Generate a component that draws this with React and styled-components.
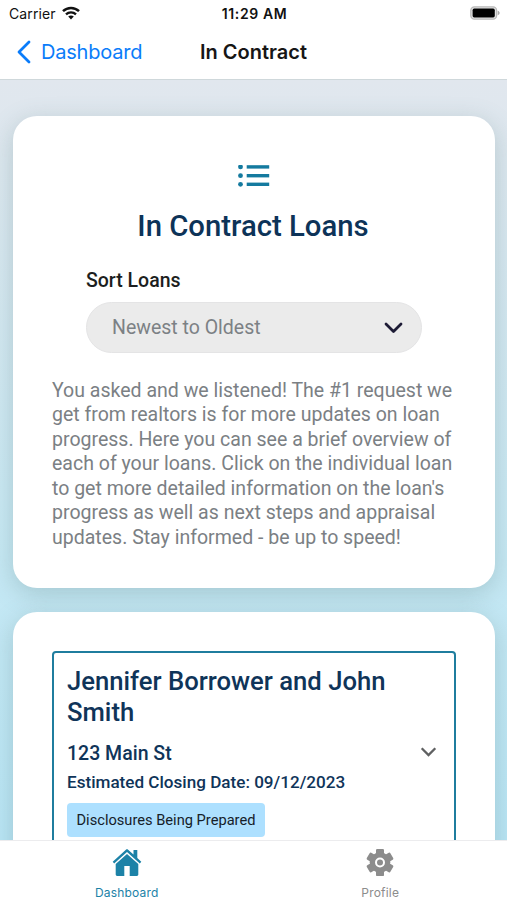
import React from 'react';
import styled, { createGlobalStyle } from 'styled-components';

const tabs = [
  { id: 'dashboard', label: 'Dashboard', active: true },
  { id: 'profile', label: 'Profile', active: false },
];

const loan = {
  borrower: 'Jennifer Borrower and John Smith',
  address: '123 Main St',
  closing: '09/12/2023',
  status: 'Disclosures Being Prepared',
};

const GlobalStyle = createGlobalStyle`
  * {
    box-sizing: border-box;
  }

  body {
    margin: 0;
    font-family: Roboto, sans-serif;
  }

  h1, h2, h3, p {
    margin: 0;
  }

  svg {
    display: block;
  }
`;

const Screen = styled.div`
  display: flex;
  flex-direction: column;
  height: 100vh;
  overflow: hidden;
  background-color: #fff;
`;

// HEADER
const StatusBar = styled.div`
  display: grid;
  grid-template-columns: 1fr auto 1fr;
  align-items: center;
  height: 26px;
  flex: none;
  padding: 0 7px 0 9px;
  font-family: Inter, sans-serif;
  font-size: 14px;
  color: #111;
`;

const Carrier = styled.div`
  display: flex;
  align-items: center;
  gap: 6px;
  letter-spacing: 0.1px;
`;

const Clock = styled.div`
  font-weight: 600;
  font-size: 14px;
  letter-spacing: 0.6px;
`;

const Battery = styled.div`
  justify-self: end;
`;

const NavBar = styled.div`
  display: grid;
  grid-template-columns: 1fr auto 1fr;
  align-items: center;
  height: 53px;
  flex: none;
  padding: 0 16px 1px;
  font-family: Inter, sans-serif;
`;

const BackLink = styled.div`
  display: flex;
  align-items: center;
  gap: 10px;
  color: #0a7cfa;
  font-size: 20px;
  letter-spacing: -0.2px;
`;

const NavTitle = styled.h1`
  font-size: 20px;
  font-weight: 600;
  color: #161616;
`;

// CONTENT
const Content = styled.main`
  flex: 1;
  min-height: 0;
  overflow: hidden;
  display: flex;
  flex-direction: column;
  gap: 24px;
  padding: 36px 12px 0 13px;
  border-top: 1px solid #cfd8db;
  background: linear-gradient(#e1e7ee, #c5e8f4 65%, #b9e5f5);
`;

const Card = styled.section`
  flex: none;
  border-radius: 24px;
  background-color: #fff;
  box-shadow: 0 6px 24px rgba(90, 125, 125, 0.3);
`;

const IntroCard = styled(Card)`
  height: 472px;
  padding: 49px 39px 0;
`;

const ListIcon = styled.svg`
  margin: 0 auto;
`;

const CardTitle = styled.h2`
  margin: 22px 2px 0 0;
  text-align: center;
  font-size: 29.3px;
  line-height: 34px;
  font-weight: 500;
  color: #0d3358;
`;

const SortField = styled.div`
  margin: 26px 34px 0;
`;

const SortLabel = styled.p`
  font-size: 19.5px;
  line-height: 24px;
  font-weight: 500;
  color: #1c1e20;
`;

const SortSelect = styled.div`
  display: flex;
  justify-content: space-between;
  align-items: center;
  height: 51px;
  margin-top: 9px;
  padding: 0 18px 0 25px;
  border: 1px solid #e4e4e5;
  border-radius: 26px;
  background-color: #ebebeb;
  color: #7c8185;
  font-size: 19.5px;
`;

const Intro = styled.p`
  margin-top: 26px;
  margin-right: -10px;
  font-size: 19.53px;
  line-height: 24.45px;
  color: #7b8084;
`;

// LOAN
const LoansCard = styled(Card)`
  height: 420px;
  padding: 39px 39px 0;
`;

const LoanBox = styled.div`
  display: flex;
  align-items: flex-start;
  height: 340px;
  border: 2px solid #1f7d9e;
  border-radius: 4px;
  padding: 13px 17px 0 13px;
`;

const LoanInfo = styled.div`
  flex: 1;
  color: #0f3459;
  font-weight: 500;
`;

const Borrower = styled.h3`
  font-size: 25.65px;
  line-height: 31px;
  font-weight: 500;
`;

const Address = styled.p`
  margin-top: 14px;
  font-size: 19.5px;
  line-height: 24px;
`;

const Closing = styled.p`
  margin-top: 5px;
  font-size: 17.1px;
  line-height: 22px;
`;

const StatusTag = styled.span`
  display: inline-block;
  height: 34px;
  margin-top: 10px;
  padding: 0 9.5px;
  border-radius: 4px;
  background-color: #ade0ff;
  color: #152029;
  font-size: 14.65px;
  line-height: 34px;
  font-weight: 400;
`;

const ExpandIcon = styled.svg`
  margin-top: 80px;
`;

// BOTTOM TABS
const TabBar = styled.nav`
  display: grid;
  grid-template-columns: 1fr 1fr;
  flex: none;
  height: 60px;
  border-top: 1px solid #ececee;
  background-color: #fff;
`;

const Tab = styled.div`
  display: flex;
  flex-direction: column;
  align-items: center;
  padding-top: 7px;
  color: ${({ $active }) => ($active ? '#1c82a7' : '#8c8c8c')};
  font-family: Inter, sans-serif;
  font-size: 12px;
  line-height: 16px;
`;

const TabLabel = styled.span`
  margin-top: 8px;
  letter-spacing: 0.2px;
`;

const WifiIcon = () => (
  <svg width="18" height="14" viewBox="0 0 18 14" fill="none">
    <path d="M1 5.2C5.5.9 12.5.9 17 5.2" stroke="#111" strokeWidth="2.5" />
    <path d="M4 8.3C6.8 5.6 11.2 5.6 14 8.3" stroke="#111" strokeWidth="2.3" />
    <path d="M6.2 10.5C7.8 9 10.2 9 11.8 10.5L9 13.5Z" fill="#111" />
  </svg>
);

const BatteryIcon = () => (
  <svg width="30" height="14" viewBox="0 0 30 14">
    <rect x="0.8" y="0.8" width="25.8" height="12.4" rx="3.6" fill="#e4e4e4" stroke="#b9b9b9" strokeWidth="1.3" />
    <rect x="2.6" y="2.6" width="22.2" height="8.8" rx="1.6" fill="#000" />
    <path d="M27.7 4.8c2.6.7 2.6 3.7 0 4.4z" fill="#aaa" />
  </svg>
);

const HomeIcon = () => (
  <svg width="30" height="29" viewBox="0 0 30 29" fill="currentColor">
    <path d="M13.9 1.8.7 13.7l1.5 1.8L15 4.1l12.8 11.4 1.5-1.8-4-3.6V2h-3.8v4.6l-5.4-4.8c-.7-.6-1.5-.6-2.2 0z" />
    <path d="M15 6 3.7 16v10.6c0 .9.6 1.4 1.4 1.4h7.2V17.9h5.4V28h7.2c.8 0 1.4-.5 1.4-1.4V16z" />
  </svg>
);

const GearIcon = () => (
  <svg width="30" height="29" viewBox="0 0 30 29" fill="none">
    <g fill="currentColor">
      <circle cx="15" cy="14.5" r="10.3" />
      {[0, 60, 120].map((angle) => (
        <rect key={angle} x="11" y="0.9" width="8" height="27.2" rx="1.2" transform={`rotate(${angle} 15 14.5)`} />
      ))}
    </g>
    <circle cx="15" cy="14.5" r="4" stroke="#fff" strokeWidth="2" />
  </svg>
);

const App = () => {
  return (
    <Screen>
      <GlobalStyle />
      <StatusBar>
        <Carrier>
          Carrier
          <WifiIcon />
        </Carrier>
        <Clock>11:29 AM</Clock>
        <Battery>
          <BatteryIcon />
        </Battery>
      </StatusBar>
      <NavBar>
        <BackLink>
          <svg width="15" height="24" viewBox="0 0 15 24" fill="none">
            <path d="M13 2 3 12l10 10" stroke="currentColor" strokeWidth="2.8" strokeLinecap="round" strokeLinejoin="round" />
          </svg>
          Dashboard
        </BackLink>
        <NavTitle>In Contract</NavTitle>
      </NavBar>
      <Content>
        <IntroCard>
          <ListIcon width="33" height="22" viewBox="0 0 33 22">
            {[1.9, 10.7, 19.3].map((y) => (
              <g key={y} fill="#147a9f">
                <circle cx="2.5" cy={y} r="2.4" />
                <rect x="8.7" y={y - 1.7} width="22.5" height="3.4" />
              </g>
            ))}
          </ListIcon>
          <CardTitle>In Contract Loans</CardTitle>
          <SortField>
            <SortLabel>Sort Loans</SortLabel>
            <SortSelect>
              Newest to Oldest
              <svg width="19" height="12" viewBox="0 0 19 12" fill="none">
                <path d="M2 2l7.5 7.5L17 2" stroke="#1d1b35" strokeWidth="2.8" strokeLinecap="round" strokeLinejoin="round" />
              </svg>
            </SortSelect>
          </SortField>
          <Intro>
            You asked and we listened! The #1 request we get from realtors is
            for more updates on loan progress. Here you can see a brief overview
            of each of your loans. Click on the individual loan to get more
            detailed information on the loan's progress as well as next steps
            and appraisal updates. Stay informed - be up to speed!
          </Intro>
        </IntroCard>
        <LoansCard>
          <LoanBox>
            <LoanInfo>
              <Borrower>{loan.borrower}</Borrower>
              <Address>{loan.address}</Address>
              <Closing>Estimated Closing Date: {loan.closing}</Closing>
              <StatusTag>{loan.status}</StatusTag>
            </LoanInfo>
            <ExpandIcon width="17" height="12" viewBox="0 0 17 12" fill="none">
              <path d="M1.7 2.2l6.8 6.8 6.8-6.8" stroke="#5f6061" strokeWidth="2.3" />
            </ExpandIcon>
          </LoanBox>
        </LoansCard>
      </Content>
      <TabBar>
        {tabs.map((tab) => (
          <Tab key={tab.id} $active={tab.active}>
            {tab.id === 'dashboard' ? <HomeIcon /> : <GearIcon />}
            <TabLabel>{tab.label}</TabLabel>
          </Tab>
        ))}
      </TabBar>
    </Screen>
  );
};

export default App;
